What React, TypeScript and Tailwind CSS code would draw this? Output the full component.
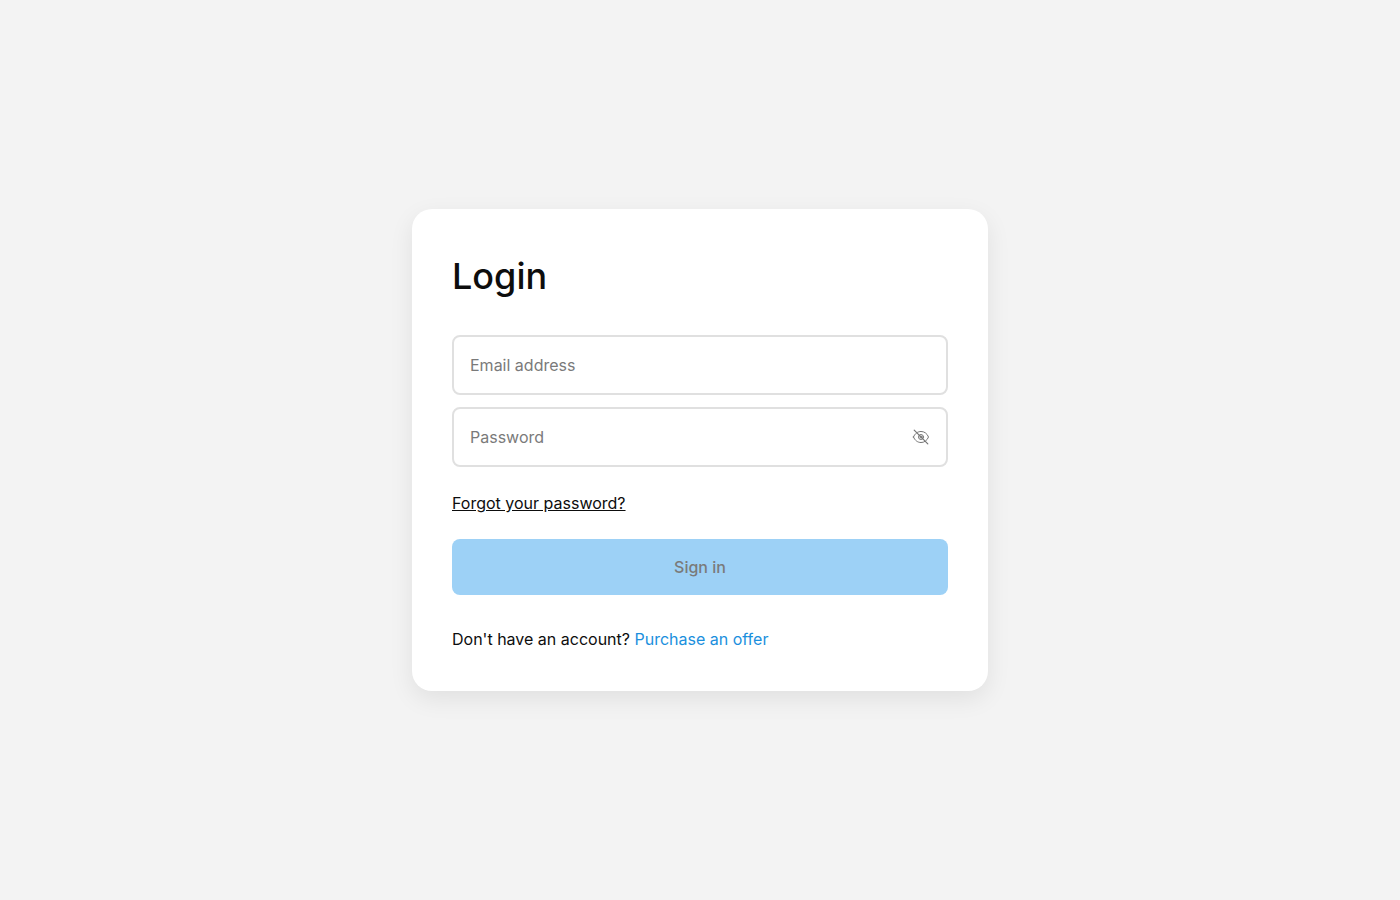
import { useState } from "react";

const fieldClass =
  "block h-[60px] w-full rounded-lg border-2 border-[#e0e0e0] bg-white pl-4 text-base text-[#0d0d0d] outline-none placeholder:text-[#7a7a7a] focus:border-[#1a8fdd]";

function EyeIcon({ crossed }: { crossed: boolean }) {
  return (
    <svg
      className="size-[18px]"
      viewBox="1 1 18 18"
      fill="none"
      stroke="currentColor"
      strokeLinecap="round"
      strokeLinejoin="round"
      aria-hidden="true"
    >
      <path d="M2.5 10C4 6.3 6.8 4.5 10 4.5S16 6.3 17.5 10C16 13.7 13.2 15.5 10 15.5S4 13.7 2.5 10Z" />
      <circle cx="10" cy="10" r="2.5" />
      <circle cx="10" cy="10" r="1" />
      {crossed && <path d="M3.2 3.2L16.8 16.8" strokeWidth="1.2" />}
    </svg>
  );
}

export default function App() {
  const [email, setEmail] = useState("");
  const [password, setPassword] = useState("");
  const [visible, setVisible] = useState(false);
  const ready = email !== "" && password !== "";

  return (
    <main className="flex min-h-screen items-center justify-center bg-[#f3f3f3] font-['Inter',sans-serif] text-base text-[#0d0d0d]">
      <section className="w-full max-w-xl rounded-[20px] bg-white p-10 shadow-[0_8px_24px_rgba(0,0,0,0.08)]">
        <h1 className="mb-8 text-4xl leading-[54px] font-medium">Login</h1>
        <form onSubmit={(event) => event.preventDefault()}>
          <div className="mb-6 flex flex-col gap-3">
            <input
              type="email"
              aria-label="Email address"
              placeholder="Email address"
              className={fieldClass}
              value={email}
              onChange={(event) => setEmail(event.target.value)}
            />
            <div className="relative">
              <input
                type={visible ? "text" : "password"}
                aria-label="Password"
                placeholder="Password"
                className={fieldClass}
                value={password}
                onChange={(event) => setPassword(event.target.value)}
              />
              <button
                type="button"
                aria-label={visible ? "Hide password" : "Show password"}
                className="absolute inset-y-0 right-[18px] flex items-center text-[#757575]"
                onClick={() => setVisible(!visible)}
              >
                <EyeIcon crossed={!visible} />
              </button>
            </div>
          </div>
          <p className="mb-6">
            <a href="#forgot" className="underline">
              Forgot your password?
            </a>
          </p>
          <button
            type="submit"
            disabled={!ready}
            className="h-14 w-full rounded-lg bg-[#1a8fdd] font-medium text-white disabled:bg-[#9dd1f6] disabled:text-[#7a7a7a]"
          >
            Sign in
          </button>
        </form>
        <p className="mt-8">
          Don't have an account?{" "}
          <a href="#purchase" className="text-[#1a8fdd]">
            Purchase an offer
          </a>
        </p>
      </section>
    </main>
  );
}
